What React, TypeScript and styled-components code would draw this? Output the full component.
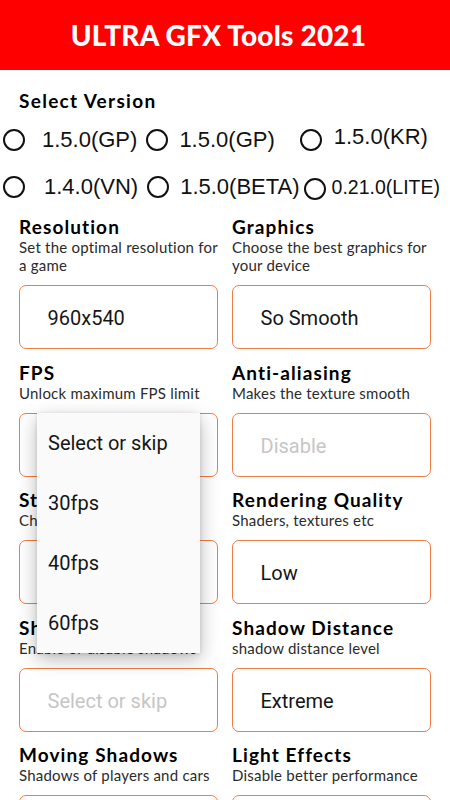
import React from "react";
import styled, { createGlobalStyle } from "styled-components";

const Global = createGlobalStyle`
  html, body { margin: 0; padding: 0; background: #ffffff; }
  body { width: 450px; height: 800px; overflow: hidden; font-family: "Lato", "Noto Sans", sans-serif; }
  * { box-sizing: border-box; }
`;

const Page = styled.div`
  width: 450px;
  height: 800px;
  overflow: hidden;
  background: #fff;
`;

const Header = styled.header`
  height: 70px;
  background: #ff0000;
  display: flex;
  align-items: center;
  justify-content: center;
  padding-right: 13px;
`;

const Title = styled.h1`
  margin: 0;
  color: #fff;
  font-family: "Lato", sans-serif;
  font-weight: 900;
  font-size: 28px;
  letter-spacing: 0.2px;
  line-height: 1;
`;

const Content = styled.main`
  padding: 0 19px;
`;

const SectionHeading = styled.h2`
  margin: 20px 0 0;
  font-family: "Lato", sans-serif;
  font-weight: 700;
  font-size: 19px;
  line-height: 22px;
  color: #000;
  letter-spacing: 1.3px;
`;

const RadioRow = styled.div<{ $mt: number }>`
  display: flex;
  align-items: center;
  height: 30px;
  margin: ${(p) => p.$mt}px 0 0 -16px;
`;

const RadioOption = styled.label<{ $ml: number; $gap: number }>`
  display: flex;
  align-items: center;
  margin-left: ${(p) => p.$ml}px;
  gap: ${(p) => p.$gap}px;
`;

const Circle = styled.span<{ $lift?: number }>`
  width: 22px;
  height: 22px;
  border: 2px solid #111;
  border-radius: 50%;
  flex: none;
  transform: translateY(${(p) => p.$lift ?? 0}px);
`;

const RadioText = styled.span<{ $size: number; $lift?: number }>`
  font-family: "Liberation Sans", Arial, sans-serif;
  font-size: ${(p) => p.$size}px;
  color: #111;
  line-height: 1;
  white-space: nowrap;
  transform: translateY(${(p) => p.$lift ?? 0}px);
`;

const Grid = styled.div`
  display: grid;
  grid-template-columns: 199px 199px;
  column-gap: 14px;
  row-gap: 12.5px;
  margin-top: 14px;
`;

const Field = styled.section`
  display: flex;
  flex-direction: column;
`;

const FieldTitle = styled.h3`
  margin: 0;
  font-family: "Lato", sans-serif;
  font-weight: 700;
  font-size: 19px;
  line-height: 22px;
  color: #000;
  letter-spacing: 1.1px;
  white-space: nowrap;
`;

const FieldDesc = styled.p`
  margin: 0;
  font-family: "Lato", sans-serif;
  font-weight: 400;
  font-size: 15px;
  line-height: 18px;
  color: #2b2b2b;
  letter-spacing: 0.22px;
`;

const DescLine = styled.span`
  display: block;
  white-space: nowrap;
`;

const BoxWrap = styled.div`
  position: relative;
  margin-top: 11px;
`;

const Box = styled.div`
  height: 64px;
  border: 1.5px solid #ee7c45;
  border-radius: 7px;
  display: flex;
  align-items: center;
  padding-left: 27.5px;
  background: #fff;
`;

const BoxText = styled.span<{ $placeholder?: boolean }>`
  font-family: "Roboto", sans-serif;
  font-size: 20px;
  color: ${(p) => (p.$placeholder ? "#c6c6c6" : "#161616")};
  transform: translateY(1px);
`;

const Menu = styled.ul`
  position: absolute;
  left: 18px;
  top: 0;
  width: 163px;
  margin: 0;
  padding: 0;
  list-style: none;
  background: #fafafa;
  box-shadow: 0 6px 18px rgba(0, 0, 0, 0.28), 0 1px 4px rgba(0, 0, 0, 0.12);
  z-index: 10;
`;

const MenuItem = styled.li`
  height: 60px;
  display: flex;
  align-items: center;
  padding-left: 11px;
  font-family: "Roboto", sans-serif;
  font-size: 20px;
  color: #161616;
`;

type FieldData = {
  title: string;
  desc: string[];
  value: string;
  placeholder?: boolean;
  menu?: string[];
};

const fields: FieldData[] = [
  { title: "Resolution", desc: ["Set the optimal resolution for", "a game"], value: "960x540" },
  { title: "Graphics", desc: ["Choose the best graphics for", "your device"], value: "So Smooth" },
  {
    title: "FPS",
    desc: ["Unlock maximum FPS limit"],
    value: "",
    menu: ["Select or skip", "30fps", "40fps", "60fps"],
  },
  { title: "Anti-aliasing", desc: ["Makes the texture smooth"], value: "Disable", placeholder: true },
  { title: "Style", desc: ["Choose the style of game"], value: "Select or skip", placeholder: true },
  { title: "Rendering Quality", desc: ["Shaders, textures etc"], value: "Low" },
  { title: "Shadows", desc: ["Enable or disable shadows"], value: "Select or skip", placeholder: true },
  { title: "Shadow Distance", desc: ["shadow distance level"], value: "Extreme" },
  { title: "Moving Shadows", desc: ["Shadows of players and cars"], value: "Select or skip", placeholder: true },
  { title: "Light Effects", desc: ["Disable better performance"], value: "Select or skip", placeholder: true },
];

export default function App() {
  return (
    <Page>
      <Global />
      <Header>
        <Title>ULTRA GFX Tools 2021</Title>
      </Header>
      <Content>
        <SectionHeading>Select Version</SectionHeading>
        <RadioRow $mt={13}>
          <RadioOption $ml={0} $gap={17}>
            <Circle />
            <RadioText $size={22}>1.5.0(GP)</RadioText>
          </RadioOption>
          <RadioOption $ml={9} $gap={11}>
            <Circle />
            <RadioText $size={22}>1.5.0(GP)</RadioText>
          </RadioOption>
          <RadioOption $ml={25} $gap={12}>
            <Circle />
            <RadioText $size={22} $lift={-3}>1.5.0(KR)</RadioText>
          </RadioOption>
        </RadioRow>
        <RadioRow $mt={17}>
          <RadioOption $ml={0} $gap={19}>
            <Circle />
            <RadioText $size={22}>1.4.0(VN)</RadioText>
          </RadioOption>
          <RadioOption $ml={9} $gap={11}>
            <Circle />
            <RadioText $size={22}>1.5.0(BETA)</RadioText>
          </RadioOption>
          <RadioOption $ml={4} $gap={6}>
            <Circle $lift={2} />
            <RadioText $size={19.5} $lift={1}>0.21.0(LITE)</RadioText>
          </RadioOption>
        </RadioRow>
        <Grid>
          {fields.map((f) => (
            <Field key={f.title}>
              <FieldTitle>{f.title}</FieldTitle>
              <FieldDesc>
                {f.desc.map((line) => (
                  <DescLine key={line}>{line}</DescLine>
                ))}
              </FieldDesc>
              <BoxWrap>
                <Box>
                  {f.value && <BoxText $placeholder={f.placeholder}>{f.value}</BoxText>}
                </Box>
                {f.menu && (
                  <Menu>
                    {f.menu.map((m) => (
                      <MenuItem key={m}>{m}</MenuItem>
                    ))}
                  </Menu>
                )}
              </BoxWrap>
            </Field>
          ))}
        </Grid>
      </Content>
    </Page>
  );
}
